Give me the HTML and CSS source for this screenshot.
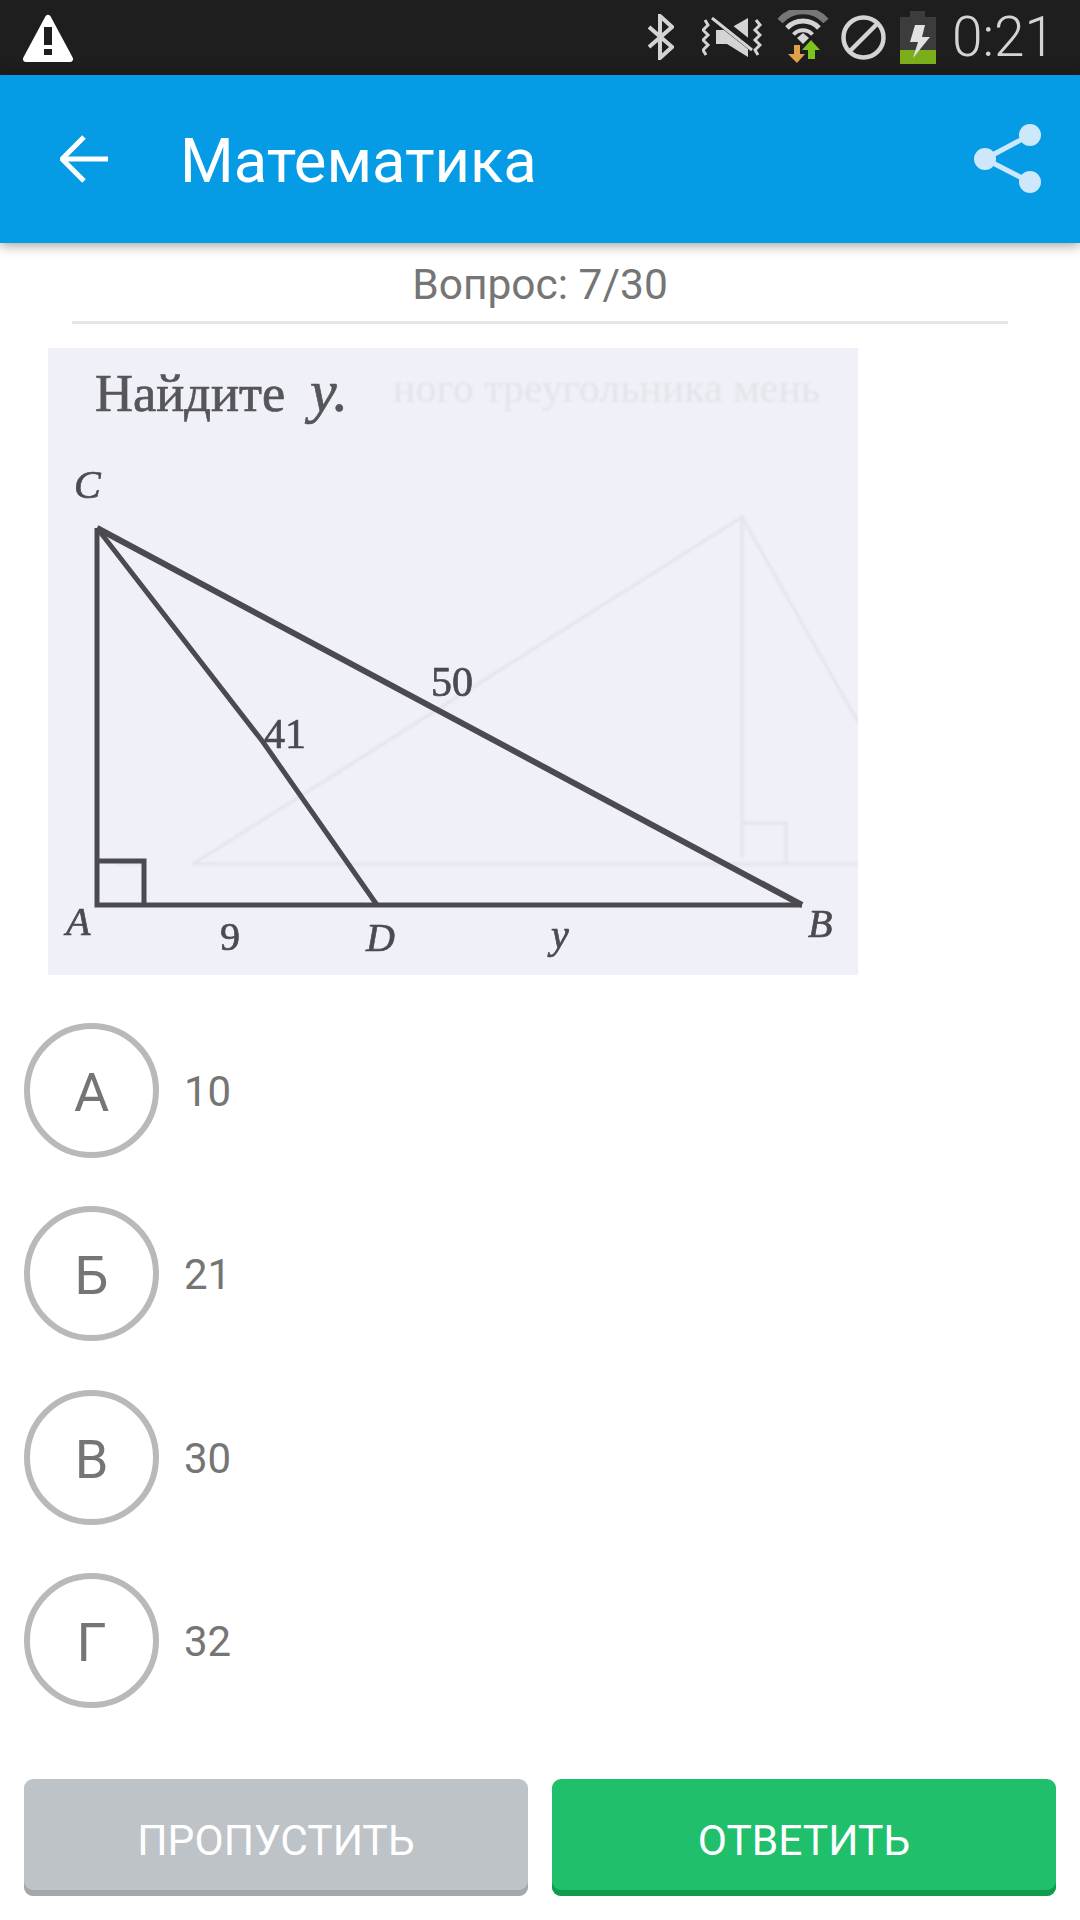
FILE: index.html
```html
<!DOCTYPE html>
<html>
<head>
<meta charset="UTF-8">
<title>Математика</title>
<link rel="stylesheet" href="styles.css">
</head>

<body>
<div class="page">
	<div class="status">
		<svg class="warn" width="52" height="49" viewBox="0 0 52 49">
			<polygon points="26,4 48,45 4,45" fill="#fff" stroke="#fff" stroke-width="6" stroke-linejoin="round"/>
			<rect x="22" y="13" width="8" height="18" fill="#1e1e1e"/>
			<rect x="22" y="35" width="8" height="6" fill="#1e1e1e"/>
		</svg>
		<div class="status-right">
			<svg width="27" height="46" viewBox="0 0 27 46">
				<polyline points="2,13 25,33 13,44 13,2 25,13 2,33" fill="none" stroke="#d4d4d4" stroke-width="4"/>
			</svg>
			<svg class="ico-vib" width="60" height="41" viewBox="0 0 60 41">
				<polygon points="14,13 25,13 46,1 46,40 25,27 14,27" fill="#d4d4d4"/>
				<line x1="9" y1="-3" x2="53" y2="32" stroke="#1e1e1e" stroke-width="9"/>
				<line x1="10" y1="1" x2="50" y2="33" stroke="#d4d4d4" stroke-width="3"/>
				<polyline points="3,3 6,8 1,13 6,18 1,23 6,28 1,33 4,38" fill="none" stroke="#d4d4d4" stroke-width="3"/>
				<polyline points="54,3 58,8 53,13 58,18 53,23 58,28 53,33 56,38" fill="none" stroke="#d4d4d4" stroke-width="3"/>
			</svg>
			<svg class="ico-wifi" width="52" height="53" viewBox="0 0 52 53">
				<path d="M3 11 A31 31 0 0 1 49 11" fill="none" stroke="#777" stroke-width="7"/>
				<path d="M10 18 A22 22 0 0 1 42 18" fill="none" stroke="#d4d4d4" stroke-width="5"/>
				<path d="M16.5 24.5 A13 13 0 0 1 35.5 24.5" fill="none" stroke="#d4d4d4" stroke-width="4"/>
				<polygon points="20,28 26,23 32,28 26,34" fill="#d4d4d4"/>
				<polygon points="17,35 23,35 23,44 28,44 20,53 11,44 17,44" fill="#e0a04a"/>
				<polygon points="34,30 43,40 38,40 38,49 31,49 31,40 25,40" fill="#7cc31c"/>
			</svg>
			<svg class="ico-block" width="45" height="45" viewBox="0 0 45 45">
				<circle cx="22.5" cy="22.5" r="20" fill="none" stroke="#d4d4d4" stroke-width="4.5"/>
				<line x1="9" y1="36" x2="36" y2="9" stroke="#d4d4d4" stroke-width="4.5"/>
			</svg>
			<svg class="ico-batt" width="36" height="53" viewBox="0 0 36 53">
				<rect x="10" y="0" width="15" height="7" fill="#3c3c3c"/>
				<rect x="0" y="6" width="36" height="33" fill="#3c3c3c"/>
				<rect x="0" y="39" width="36" height="14" fill="#7cae1c"/>
				<polygon points="15,14 10,31 18,31 13,47 30,26 22,26 25,14" fill="#e2e2e2"/>
			</svg>
			<span class="time">0:21</span>
		</div>
	</div>

	<div class="bar">
		<svg class="back" width="48" height="48" viewBox="0 0 48 48">
			<polyline points="24,2 2,24 24,46" fill="none" stroke="#fff" stroke-width="5"/>
			<line x1="3" y1="24" x2="48" y2="24" stroke="#fff" stroke-width="5"/>
		</svg>
		<span class="title">Математика</span>
		<svg class="share" width="67" height="70" viewBox="0 0 67 70">
			<line x1="11" y1="35" x2="56" y2="11" stroke="#cde8fb" stroke-width="5"/>
			<line x1="11" y1="35" x2="56" y2="58" stroke="#cde8fb" stroke-width="5"/>
			<circle cx="11" cy="35" r="11" fill="#cde8fb"/>
			<circle cx="56" cy="11" r="11" fill="#cde8fb"/>
			<circle cx="56" cy="58" r="11" fill="#cde8fb"/>
		</svg>
	</div>

	<div class="count">Вопрос: 7/30</div>

	<svg class="pic" width="810" height="627" viewBox="0 0 810 627">
		<rect width="810" height="627" fill="#f0f1f8"/>
		<g class="ghost">
			<text x="345" y="54">ного треугольника мень</text>
			<polyline points="145,516 694,169 694,509"/>
			<line x1="694" y1="169" x2="810" y2="374"/>
			<line x1="145" y1="516" x2="810" y2="516"/>
			<polyline points="694,475 738,475 738,516"/>
			<polyline points="68,516 96,516"/>
		</g>
		<g class="lines">
			<polyline class="thin" points="49,180 49,557 754,557"/>
			<line x1="49" y1="180" x2="754" y2="557"/>
			<polyline class="thin" points="49,180 215,394 329,557"/>
			<polyline class="thin" points="49,513 96,513 96,557"/>
		</g>
		<g class="marks">
			<text class="head" x="47" y="63">Найдите</text>
			<text class="head it big" x="262" y="63">y.</text>
			<text class="it" x="26" y="150">C</text>
			<text class="num" x="383" y="348">50</text>
			<text class="num" x="216" y="400">41</text>
			<text class="it" x="18" y="587">A</text>
			<text x="172" y="602">9</text>
			<text class="it" x="318" y="603">D</text>
			<text class="it" x="503" y="600">y</text>
			<text class="it" x="760" y="589">B</text>
		</g>
	</svg>

	<ul class="options">
		<li><span class="letter">А</span><span class="val">10</span></li>
		<li><span class="letter">Б</span><span class="val">21</span></li>
		<li><span class="letter">В</span><span class="val">30</span></li>
		<li><span class="letter">Г</span><span class="val">32</span></li>
	</ul>

	<div class="btns">
		<a class="btn skip">ПРОПУСТИТЬ</a>
		<a class="btn answer">ОТВЕТИТЬ</a>
	</div>
</div>
</body>
</html>
```

FILE: styles.css
```css
*{ margin:0; padding:0; list-style:none; box-sizing:border-box;}
body{ background:#fff; font-family:Roboto,"Noto Sans",sans-serif; color:#757575;}
.page{ width:1080px; height:1920px; display:flex; flex-direction:column; overflow:hidden;}

.status{ height:75px; flex:none; background:#1e1e1e; display:flex; align-items:flex-start; justify-content:space-between; padding:0 25px 0 22px;}
.warn{ margin-top:14px;}
.status-right{ display:flex; align-items:flex-start;}
.status-right svg{ display:block; margin-top:14px;}
.ico-vib{ margin-left:28px;}
.status-right .ico-vib{ margin-top:17px;}
.ico-wifi{ margin-left:15px;}
.status-right .ico-wifi{ margin-top:10px;}
.ico-block{ margin-left:12px;}
.status-right .ico-block{ margin-top:15px;}
.ico-batt{ margin-left:14px;}
.status-right .ico-batt{ margin-top:11px;}
.time{ margin-left:16px; font-size:55px; font-weight:300; line-height:75px; color:#d4d4d4;}

.bar{ height:168px; flex:none; background:#069be5; display:flex; align-items:center; padding:0 39px 0 60px; position:relative; box-shadow:0 2px 12px rgba(0,0,0,.4);}
.title{ margin:5px 0 0 72px; font-size:61.5px; color:#fff; line-height:1; flex:1;}

.count{ height:81px; flex:none; margin:0 72px; border-bottom:3px solid #e5e5e5; text-align:center; font-size:42.5px; line-height:83px;}

.pic{ display:block; flex:none; margin:24px 0 0 48px;}
.pic .ghost{ fill:none; stroke:#e3e4ec; stroke-width:3; filter:blur(1.2px);}
.pic .ghost text{ fill:#e3e4ea; stroke:none; font-family:"Liberation Serif",serif; font-size:42px;}
.pic .lines{ fill:none; stroke:#4a4a50; stroke-width:6; filter:blur(.7px);}
.pic .lines .thin{ stroke-width:5;}
.pic .marks{ fill:#4a4a50; stroke:#4a4a50; stroke-width:.7; font-family:"Liberation Serif",serif; font-size:40px; filter:blur(.7px);}
.pic .marks .it{ font-style:italic;}
.pic .marks .num{ font-size:42px;}
.pic .marks .head{ font-size:52.5px; fill:#55555a; stroke:#55555a;}
.pic .marks .big{ font-size:60px;}

.options{ margin:48px 0 0 24px; display:flex; flex-direction:column; gap:48.3px;}
.options li{ display:flex; align-items:center; height:135px;}
.letter{ width:135px; height:135px; flex:none; border:6px solid #b9b9b9; border-radius:50%; display:flex; align-items:center; justify-content:center; padding-top:4px; font-size:54px;}
.val{ margin-left:25px; padding-top:2px; font-size:42px;}

.btns{ margin-top:auto; padding:0 24px 24px; display:flex; gap:24px;}
.btn{ flex:1; height:117px; border-radius:9px; padding-top:6px; color:#fff; font-size:42.5px; display:flex; align-items:center; justify-content:center;}
.skip{ background:#bdc3c7; box-shadow:inset 0 -6px 0 #a5a8ab;}
.answer{ background:#20bf6b; box-shadow:inset 0 -6px 0 #0f9d4d;}
```
